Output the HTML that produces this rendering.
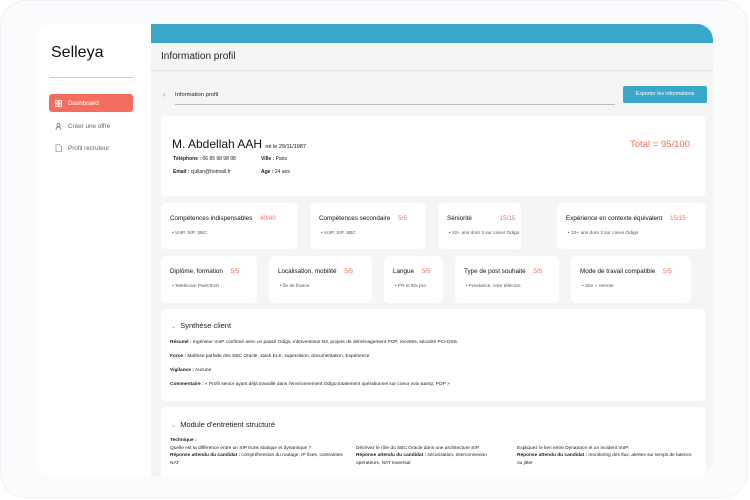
<!DOCTYPE html>
<html><head><meta charset="utf-8"><style>
*{box-sizing:border-box;margin:0;padding:0}
body{width:750px;height:500px;background:#fff;font-family:"Liberation Sans",sans-serif;color:#222;position:relative;overflow:hidden}
.frame{position:absolute;left:0;top:0;width:748px;height:498px;border-radius:26px;background:#fafbfd;border:1px solid #f0f1f4}
.side{position:absolute;left:36px;top:24px;width:115px;height:452px;background:#fff;border-radius:14px 0 0 14px}
.logo{position:absolute;left:15px;top:20px;font-size:16px;color:#111}
.sep{position:absolute;left:13px;top:53px;width:84px;height:1px;background:#ccc}
.nav{position:absolute;left:13px;width:84px;height:18px;font-size:6.3px;color:#666;display:flex;align-items:center;padding-left:6px;gap:6px}
.nav.act{background:#f46e5f;color:#fff;border-radius:3px}
.main{position:absolute;left:151px;top:24px;width:562px;height:452px;background:#f5f5f5;border-radius:0 16px 16px 0;overflow:hidden}
.top{height:19px;background:#3ba8c9}
.title{height:28px;border-bottom:1px solid #e2e2e2;font-size:10px;padding:8px 10px;color:#222}
.abs{position:absolute}
.card{position:absolute;background:#fff;border-radius:5px}
.ct{position:absolute;left:9px;top:12px;font-size:6.3px;color:#111;white-space:nowrap}
.ct b{color:#f46e5f;font-weight:normal;margin-left:6px}
.cb{position:absolute;left:11px;top:28px;font-size:4.8px;color:#555;white-space:nowrap}
.red{color:#f46e5f}
.sm{font-size:5px;color:#222;white-space:nowrap}
strong{font-weight:bold}
</style></head><body>
<div class="frame"></div>
<div class="side">
<div class="logo">Selleya</div>
<div class="sep"></div>
<div class="nav act" style="top:70px"><svg width="7" height="7" viewBox="0 0 7 7" fill="none" stroke="#fff" stroke-width=".8"><rect x=".5" y=".5" width="2.5" height="2.5"/><rect x="4" y=".5" width="2.5" height="2.5"/><rect x=".5" y="4" width="2.5" height="2.5"/><rect x="4" y="4" width="2.5" height="2.5"/></svg>Dashboard</div>
<div class="nav" style="top:93px"><svg width="7" height="7" viewBox="0 0 7 7" fill="none" stroke="#666" stroke-width=".7"><circle cx="3.5" cy="2" r="1.5"/><path d="M1 7C1 5 2 4 3.5 4S6 5 6 7"/></svg>Créer une offre</div>
<div class="nav" style="top:115px"><svg width="7" height="8" viewBox="0 0 7 8" fill="none" stroke="#777" stroke-width=".6"><path d="M1 .5h3.5L6.5 2.5v5H1z"/></svg>Profil recruteur</div>
</div>
<div class="main">
<div class="top"></div>
<div class="title">Information profil</div>
<div class="abs red" style="left:12px;top:66px;font-size:8px">‹</div>
<div class="abs sm" style="left:24px;top:68px;font-size:5.8px">Information profil</div>
<div class="abs" style="left:24px;top:80px;width:440px;height:1px;background:#bbb"></div>
<div class="abs" style="left:472px;top:62px;width:84px;height:17px;background:#3ba8c9;border-radius:2px;color:#fff;font-size:5.3px;text-align:center;line-height:17px">Exporter les informations</div>
<div class="card" style="left:10px;top:92px;width:545px;height:80px">
<div class="abs" style="left:11px;top:21px;font-size:12px;color:#111">M. Abdellah AAH <span style="font-size:5.5px">né le 29/11/1987</span></div>
<div class="abs sm" style="left:12px;top:40px"><strong>Téléphone :</strong> 06 85 98 98 98</div>
<div class="abs sm" style="left:100px;top:40px"><strong>Ville :</strong> Paris</div>
<div class="abs sm" style="left:12px;top:53px"><strong>Email :</strong> cjulian@hotmail.fr</div>
<div class="abs sm" style="left:100px;top:53px"><strong>Age :</strong> 24 ans</div>
<div class="abs red" style="left:469px;top:23px;font-size:9.5px">Total = 95/100</div>
</div>
<div class="card" style="left:10px;top:179px;width:137px;height:46px"><div class="ct">Compétences indispensables <b>40/40</b></div><div class="cb">• VoIP, SIP, SBC</div></div>
<div class="card" style="left:159px;top:179px;width:116px;height:46px"><div class="ct">Compétences secondaire <b>5/5</b></div><div class="cb">• VoIP, SIP, SBC</div></div>
<div class="card" style="left:287px;top:179px;width:83px;height:46px"><div class="ct">Séniorité <b style="margin-left:26px">15/15</b></div><div class="cb">• 10+ ans dont 3 sur coeur Odigo</div></div>
<div class="card" style="left:406px;top:179px;width:149px;height:46px"><div class="ct">Expérience en contexte équivalent <b>15/15</b></div><div class="cb">• 10+ ans dont 3 sur coeur Odigo</div></div>
<div class="card" style="left:10px;top:232px;width:96px;height:47px"><div class="ct">Diplôme, formation <b>5/5</b></div><div class="cb">• Telelecom ParisTech</div></div>
<div class="card" style="left:118px;top:232px;width:103px;height:47px"><div class="ct">Localisation, mobilité <b>5/5</b></div><div class="cb">• Île de france</div></div>
<div class="card" style="left:233px;top:232px;width:59px;height:47px"><div class="ct">Langue <b>5/5</b></div><div class="cb">• FR et EN pro</div></div>
<div class="card" style="left:304px;top:232px;width:104px;height:47px"><div class="ct">Type de post souhaité <b>5/5</b></div><div class="cb">• Freelance, core télécom</div></div>
<div class="card" style="left:420px;top:232px;width:120px;height:47px"><div class="ct">Mode de travail compatible <b>5/5</b></div><div class="cb">• Site + remote</div></div>
<div class="card" style="left:10px;top:285px;width:545px;height:92px">
<div class="abs" style="left:10px;top:12px;font-size:7.5px;color:#222"><span class="red" style="font-size:6px">⌄</span>&nbsp; Synthèse client</div>
<div class="abs sm" style="left:9px;top:31px;font-size:4.8px"><strong>Résumé :</strong> Ingénieur VoIP confirmé avec un passé Odigo, interventions N3, projets de déménagement POP, recettes, sécurité PCI-DSS.</div>
<div class="abs sm" style="left:9px;top:45px;font-size:4.8px"><strong>Force :</strong> Maîtrise parfaite des SBC Oracle, stack ELK, supervision, documentation, Expérience</div>
<div class="abs sm" style="left:9px;top:59px;font-size:4.8px"><strong>Vigilance :</strong> Aucune</div>
<div class="abs sm" style="left:9px;top:73px;font-size:4.8px"><strong>Commentaire :</strong> « Profil senior ayant déjà travaillé dans l'environnement Odigo,totalement opérationnel sur coeur voix &amp;amp; POP »</div>
</div>
<div class="card" style="left:10px;top:383px;width:545px;height:80px">
<div class="abs" style="left:10px;top:13px;font-size:7.5px;color:#222"><span class="red" style="font-size:6px">⌄</span>&nbsp; Module d'entretient structuré</div>
<div class="abs" style="left:9px;top:30px;font-size:4.8px;line-height:7.5px;width:180px"><strong>Technique :</strong><br>Quelle est la différence entre un SIP trunk statique et dynamique ?<br><strong>Réponse attendu du candidat :</strong> compréhension du routage, IP fixes, contraintes NAT</div>
<div class="abs" style="left:195px;top:37.5px;font-size:4.8px;line-height:7.5px;width:150px">Décrivez le rôle du SBC Oracle dans une architecture SIP.<br><strong>Réponse attendu du candidat :</strong> sécurisation, interconnexion opérateurs, NAT traversal</div>
<div class="abs" style="left:356px;top:37.5px;font-size:4.8px;line-height:7.5px;width:175px">Expliquez le lien entre Dynatrace et un incident VoIP.<br><strong>Réponse attendu du candidat :</strong> monitoring des flux, alertes sur temps de latence ou jitter</div>
</div>
</div>
</body></html>
